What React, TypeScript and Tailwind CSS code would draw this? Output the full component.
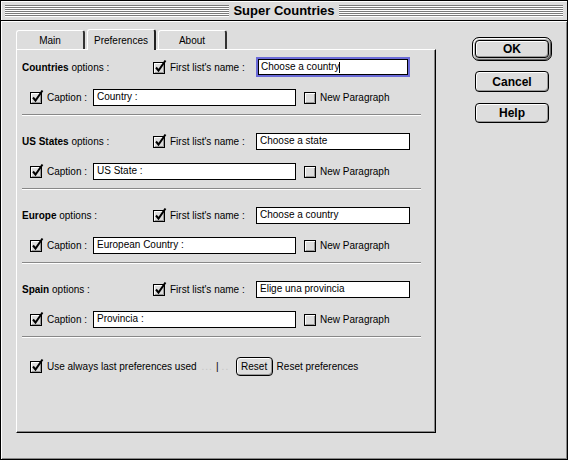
import React from 'react'

const SECTIONS = [
  { name: 'Countries', first: 'Choose a country', caption: 'Country :', focused: true },
  { name: 'US States', first: 'Choose a state', caption: 'US State :', focused: false },
  { name: 'Europe', first: 'Choose a country', caption: 'European Country :', focused: false },
  { name: 'Spain', first: 'Elige una provincia', caption: 'Provincia :', focused: false },
]

const CheckBox: React.FC<{ checked?: boolean }> = ({ checked }) => (
  <svg width="14" height="14" viewBox="0 0 14 14" className="shrink-0 overflow-visible">
    <rect x="0.5" y="2.5" width="11" height="11" fill="#dddddd" stroke="#000" />
    <path d="M1.5 12V3.5H11" stroke="#fff" fill="none" />
    <path d="M2 12.5H10.5V4" stroke="#999" fill="none" />
    {checked && <path d="M3 7.5L5.5 10.5L12.5 0.5" stroke="#000" strokeWidth="2" fill="none" />}
  </svg>
)

const Field: React.FC<{ text: string; width: string; focused?: boolean }> = ({ text, width, focused }) =>
  focused ? (
    <div className={`${width} h-[20px] border-2 border-[#6a6ad8] flex`}>
      <div className="flex-1 border border-black bg-white flex items-center pl-[2px] leading-none">
        {text}
        <span className="w-px h-[11px] bg-black" />
      </div>
    </div>
  ) : (
    <div className={`${width} h-[17px] border border-black bg-white flex items-center pl-[3px] leading-none`}>
      {text}
    </div>
  )

const MacButton: React.FC<{ label: string; className?: string }> = ({ label, className }) => (
  <div
    className={`${className ?? ''} border border-black rounded-[4px] bg-[#dddddd] shadow-[inset_1px_1px_0_#fff,inset_-1px_-1px_0_#999] flex items-center justify-center`}
  >
    {label}
  </div>
)

const Section: React.FC<{ s: (typeof SECTIONS)[number]; first: boolean }> = ({ s, first }) => (
  <div className={first ? 'mt-[7px]' : 'mt-[15px]'}>
    {/* list name row */}
    <div className="flex items-center h-[20px]">
      <span className="w-[131px]">
        <b className="font-bold">{s.name}</b> options :
      </span>
      <div className="w-[103px] flex items-center">
        <CheckBox checked />
        <span className="ml-[3px]">First list's name :</span>
      </div>
      <Field text={s.first} width="w-[154px]" focused={s.focused} />
    </div>
    {/* caption row */}
    <div className="flex items-center h-[20px] mt-[10px] pl-[8px]">
      <CheckBox checked />
      <span className="ml-[3px] w-[46px]">Caption :</span>
      <Field text={s.caption} width="w-[203px]" />
      <span className="ml-[8px]">
        <CheckBox />
      </span>
      <span className="ml-[2px]">New Paragraph</span>
    </div>
    <div className="mt-[7px] w-[399px] h-[2px] border-t border-[#888] border-b border-b-white" />
  </div>
)

export default function App() {
  return (
    <div className="w-[568px] h-[460px] bg-[#dddddd] border border-black flex flex-col text-black text-[10px] font-['Liberation_Sans',Arial,sans-serif]">
      {/* title bar */}
      <div className="h-[20px] border-b border-black flex items-center px-[4px] shadow-[inset_1px_1px_0_#fff]">
        <div className="flex-1 h-[12px] bg-[image:repeating-linear-gradient(to_bottom,#7b7b7b_0px,#7b7b7b_1px,#ffffff_1px,#ffffff_2px)]" />
        <span className="px-[4px] text-[13px] font-bold leading-none">Super Countries</span>
        <div className="flex-1 h-[12px] bg-[image:repeating-linear-gradient(to_bottom,#7b7b7b_0px,#7b7b7b_1px,#ffffff_1px,#ffffff_2px)]" />
      </div>

      <div className="flex-1 flex shadow-[inset_1px_1px_0_#fff,inset_-1px_-1px_0_#888]">
        {/* tabs + panel */}
        <div className="pl-[15px] pt-[8px] flex flex-col">
          <div className="flex items-end gap-[2px] h-[20px]">
            <div className="w-[69px] h-[19px] pt-px border-t border-l border-white border-r-2 border-r-[#333] rounded-t-[3px] flex items-center justify-center">
              Main
            </div>
            <div className="relative z-10 -mb-px w-[69px] h-[21px] bg-[#dddddd] border-t border-l border-white border-r-2 border-r-[#222] rounded-t-[3px] flex items-center justify-center">
              Preferences
            </div>
            <div className="w-[69px] h-[19px] pt-px border-t border-l border-white border-r-2 border-r-[#333] rounded-t-[3px] flex items-center justify-center">
              About
            </div>
          </div>
          <div className="w-[420px] h-[384px] border-t border-l border-white border-r border-b border-r-black border-b-black shadow-[inset_-1px_-1px_0_#888] pl-[5px] flex flex-col">
            {SECTIONS.map((s, i) => (
              <Section key={s.name} s={s} first={i === 0} />
            ))}
            {/* bottom row */}
            <div className="flex items-center h-[20px] mt-[18px] pl-[8px]">
              <CheckBox checked />
              <span className="ml-[3px] w-[169px] flex">
                Use always last preferences used
                <span className="ml-[5px] text-[#c4c4c4] tracking-[1px]">...</span>
              </span>
              <span>|</span>
              <span className="w-[17px] pl-[3px] text-[#c4c4c4] tracking-[1px]">..</span>
              <MacButton label="Reset" className="w-[37px] h-[19px] rounded-[3px]" />
              <span className="ml-[4px]">Reset preferences</span>
            </div>
          </div>
        </div>

        {/* dialog buttons */}
        <div className="ml-[36px] pt-[16px] flex flex-col text-[12px] font-bold">
          <div className="w-[80px] h-[24px] border border-black rounded-[7px] p-[2px] bg-[#bbbbbb] shadow-[inset_1px_1px_0_#fff,inset_-1px_-1px_0_#666]">
            <MacButton label="OK" className="w-full h-full" />
          </div>
          <MacButton label="Cancel" className="ml-[3px] mt-[10px] w-[74px] h-[21px]" />
          <MacButton label="Help" className="ml-[3px] mt-[11px] w-[74px] h-[20px]" />
        </div>
      </div>
    </div>
  )
}
